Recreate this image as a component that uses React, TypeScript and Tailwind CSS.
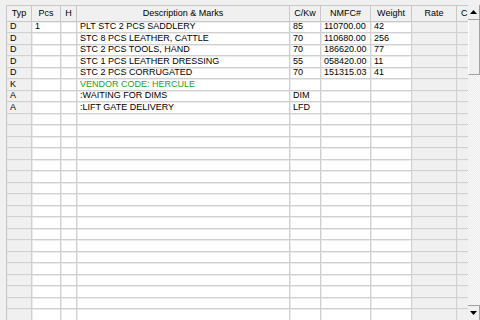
import React from 'react'

type Col = { key: string; label: string; w: string; gray?: boolean }

const COLS: Col[] = [
  { key: 'typ', label: 'Typ', w: 'w-[25px]', gray: true },
  { key: 'pcs', label: 'Pcs', w: 'w-[29px]' },
  { key: 'h', label: 'H', w: 'w-[16px]' },
  { key: 'desc', label: 'Description & Marks', w: 'w-[213px]' },
  { key: 'ckw', label: 'C/Kw', w: 'w-[31px]' },
  { key: 'nmfc', label: 'NMFC#', w: 'w-[50px]' },
  { key: 'weight', label: 'Weight', w: 'w-[41px]' },
  { key: 'rate', label: 'Rate', w: 'w-[45px]', gray: true },
  { key: 'c', label: 'C', w: 'w-[40px]', gray: true },
]

type Row = Partial<Record<string, string>> & { green?: boolean }

const ROWS: Row[] = [
  { typ: 'D', pcs: '1', desc: 'PLT STC 2 PCS SADDLERY', ckw: '85', nmfc: '110700.00', weight: '42' },
  { typ: 'D', desc: 'STC 8 PCS LEATHER, CATTLE', ckw: '70', nmfc: '110680.00', weight: '256' },
  { typ: 'D', desc: 'STC 2 PCS TOOLS, HAND', ckw: '70', nmfc: '186620.00', weight: '77' },
  { typ: 'D', desc: 'STC 1 PCS LEATHER DRESSING', ckw: '55', nmfc: '058420.00', weight: '11' },
  { typ: 'D', desc: 'STC 2 PCS CORRUGATED', ckw: '70', nmfc: '151315.03', weight: '41' },
  { typ: 'K', desc: 'VENDOR CODE: HERCULE', green: true },
  { typ: 'A', desc: ':WAITING FOR DIMS', ckw: 'DIM' },
  { typ: 'A', desc: ':LIFT GATE DELIVERY', ckw: 'LFD' },
]

const EMPTY = 19

export default function App() {
  const rows = [...ROWS, ...Array.from({ length: EMPTY }, () => ({} as Row))]

  return (
    <div className="w-[480px] h-[320px] overflow-hidden bg-[#f0f0f0] pt-[5px] pl-[6px] flex text-[#000] font-['Liberation_Sans',Arial,sans-serif] text-[9px] leading-none">
      {/* grid */}
      <div className="flex-1 overflow-hidden border-l border-t border-[#c8c8c8] bg-white">
        <div className="flex h-[15.5px] bg-[#f0f0f0] border-b border-[#c8c8c8]">
          {COLS.map(c => (
            <div
              key={c.key}
              className={`${c.w} shrink-0 border-r border-[#c8c8c8] flex items-center whitespace-nowrap overflow-hidden ${c.key === 'c' ? 'justify-start pl-[4px]' : 'justify-center'}`}
            >
              {c.label}
            </div>
          ))}
        </div>
        {rows.map((r, i) => (
          <div key={i} className="flex h-[11.5px] border-b border-[#d0d0d0]">
            {COLS.map(c => (
              <div
                key={c.key}
                className={`${c.w} shrink-0 border-r border-[#d0d0d0] shadow-[inset_1px_1px_0_#ebebeb] flex items-center pl-[3px] whitespace-nowrap overflow-hidden ${c.gray ? 'bg-[#f0f0f0]' : 'bg-white'} ${c.key === 'desc' && r.green ? 'text-[#1ea01e]' : ''}`}
              >
                {r[c.key] ?? ''}
              </div>
            ))}
          </div>
        ))}
      </div>

      {/* vertical scrollbar */}
      <div className="w-[12px] shrink-0 flex flex-col bg-[#f4f4f4]">
        <div className="h-[15px] bg-[#f0f0f0] border-r border-b border-[#a0a0a0] flex items-center justify-center">
          <svg width="7" height="4" viewBox="0 0 7 4"><path d="M3.5 0L7 4H0z" fill="#000" /></svg>
        </div>
        <div className="h-[55px] bg-[#f0f0f0] border-l border-white border-r border-b border-r-[#a0a0a0] border-b-[#a0a0a0]" />
        <div className="flex-1 bg-[repeating-conic-gradient(#f9f9f9_0%_25%,#ececec_0%_50%)] bg-[length:2px_2px]" />
        <div className="h-[15px] bg-[#f0f0f0] border-r border-t border-[#a0a0a0] flex items-center justify-center">
          <svg width="7" height="4" viewBox="0 0 7 4"><path d="M0 0H7L3.5 4z" fill="#000" /></svg>
        </div>
      </div>
    </div>
  )
}
